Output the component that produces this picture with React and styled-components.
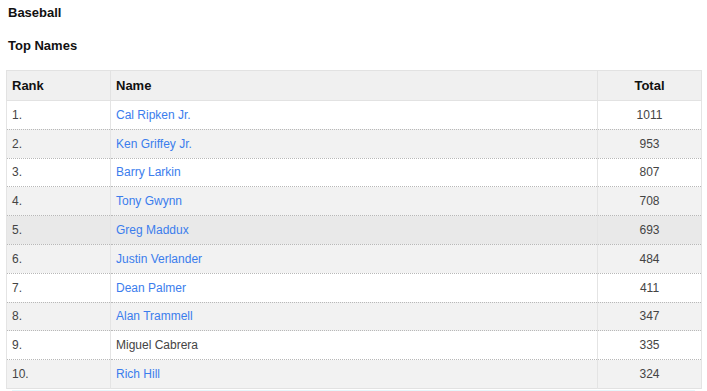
import React from 'react';
import styled, { createGlobalStyle } from 'styled-components';

const players = [
  { name: 'Cal Ripken Jr.', total: 1011, link: true },
  { name: 'Ken Griffey Jr.', total: 953, link: true },
  { name: 'Barry Larkin', total: 807, link: true },
  { name: 'Tony Gwynn', total: 708, link: true },
  { name: 'Greg Maddux', total: 693, link: true, hover: true },
  { name: 'Justin Verlander', total: 484, link: true },
  { name: 'Dean Palmer', total: 411, link: true },
  { name: 'Alan Trammell', total: 347, link: true },
  { name: 'Miguel Cabrera', total: 335, link: false },
  { name: 'Rich Hill', total: 324, link: true },
];

export default function App() {
  return (
    <>
      <GlobalStyle />
      <Page>
        <Title>Baseball</Title>
        <Subtitle>Top Names</Subtitle>
        <Table>
          <colgroup>
            <col style={{ width: '104px' }} />
            <col />
            <col style={{ width: '104px' }} />
          </colgroup>
          <thead>
            <tr>
              <Th>Rank</Th>
              <Th>Name</Th>
              <Th center>Total</Th>
            </tr>
          </thead>
          <tbody>
            {players.map((p, i) => (
              <Row key={p.name} striped={i % 2 === 1} hover={p.hover}>
                <Td>{i + 1}.</Td>
                <Td>{p.link ? <NameLink href="#">{p.name}</NameLink> : p.name}</Td>
                <Td center>{p.total}</Td>
              </Row>
            ))}
          </tbody>
        </Table>
        <Footer />
      </Page>
    </>
  );
}

const GlobalStyle = createGlobalStyle`
  body {
    margin: 0;
    background: #fff;
    font-family: "Liberation Sans", Arial, sans-serif;
  }
`;

const Page = styled.div`
  padding: 5px 6px 0 6px;
  width: 695px;
`;

const Title = styled.h1`
  margin: 0 0 0 2px;
  font-size: 13px;
  font-weight: bold;
  color: #111;
  line-height: 15px;
`;

const Subtitle = styled.h2`
  margin: 18px 0 0 2px;
  font-size: 13px;
  font-weight: bold;
  color: #111;
  line-height: 15px;
`;

const Table = styled.table`
  margin-top: 17px;
  width: 696px;
  border-collapse: collapse;
  table-layout: fixed;
  border: 1px solid #e2e2e2;
  font-size: 12px;
`;

const Th = styled.th`
  height: 29px;
  padding: 0 5px;
  background: #f0f0f0;
  border: 1px solid #e2e2e2;
  text-align: ${p => (p.center ? 'center' : 'left')};
  font-size: 13px;
  font-weight: bold;
  color: #111;
`;

const Row = styled.tr`
  background: ${p => (p.hover ? '#e9e9e9' : p.striped ? '#f2f2f2' : '#fff')};
  border-top: 1px dotted #b8b8b8;
`;

const Td = styled.td`
  height: 27.8px;
  padding: 0 5px;
  border-left: 1px solid #e4e4e4;
  border-right: 1px solid #e4e4e4;
  text-align: ${p => (p.center ? 'center' : 'left')};
  color: #444;
`;

const NameLink = styled.a`
  color: #3b7ded;
  text-decoration: none;
`;

const Footer = styled.div`
  margin: 1px 6px 0;
  height: 2px;
  background: #e6f6fa;
`;
